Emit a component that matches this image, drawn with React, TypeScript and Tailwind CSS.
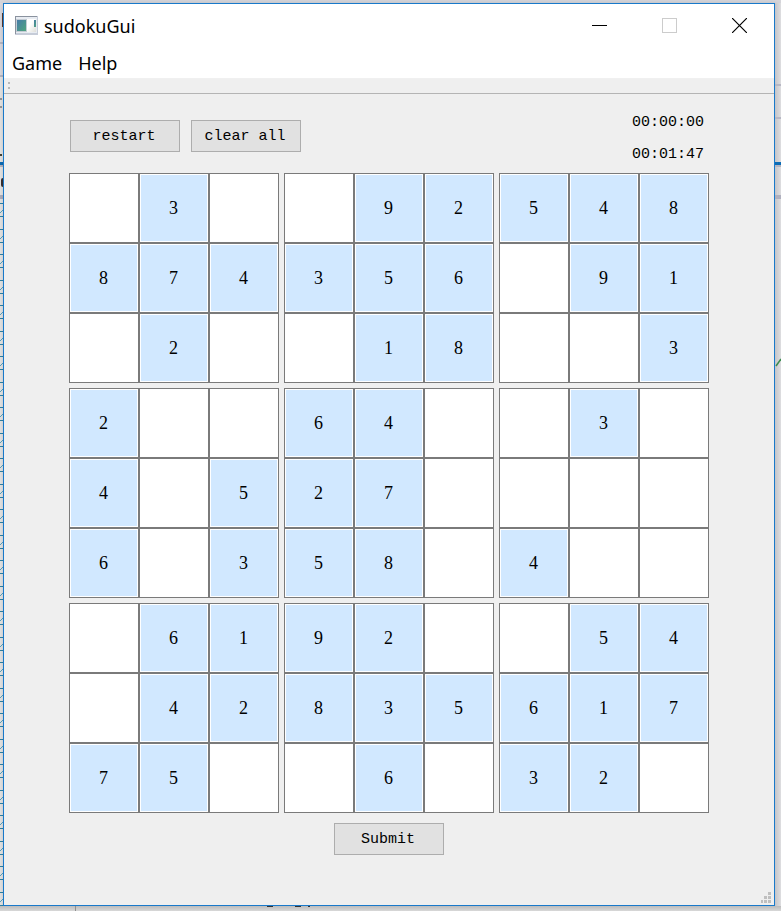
const blocks = [
  [" 3 874 2 ", " 92356 18", "548 91  3"],
  ["2  4 56 3", "64 27 58 ", " 3    4  "],
  [" 61 4275 ", "92 835 6 ", " 5461732 "],
];

const rows = Array.from({ length: 28 }, (_, i) => i);

function Cell({ value, name }: { value: string; name: string }) {
  const given = value !== " ";
  return (
    <input
      type="text"
      aria-label={name}
      defaultValue={given ? value : ""}
      readOnly={given}
      maxLength={1}
      className={`aspect-square w-full min-w-0 border border-[#7a7a7a] p-0 pt-px pr-px text-center font-['Liberation_Serif',serif] text-[18px] outline-none ring-1 ring-inset ring-white ${
        given ? "bg-[#d1e8ff]" : "bg-white"
      }`}
    />
  );
}

function Board() {
  return (
    <div className="grid grid-cols-3 gap-[5px]">
      {blocks.flatMap((band, r) =>
        band.map((block, c) => (
          <div key={`${r}-${c}`} className="grid grid-cols-3">
            {block.split("").map((v, i) => (
              <Cell
                key={i}
                value={v}
                name={`Row ${r * 3 + Math.floor(i / 3) + 1}, column ${c * 3 + (i % 3) + 1}`}
              />
            ))}
          </div>
        )),
      )}
    </div>
  );
}

const push =
  "h-8 w-[110px] border border-[#adadad] bg-[#e1e1e1] pt-[2px] pr-[2px] font-['Liberation_Mono',monospace] text-[15px] leading-4";

function TitleBar() {
  return (
    <header className="flex h-[43px] items-center bg-white pl-[11px]">
      <svg width="23" height="19" viewBox="0 0 23 19" aria-hidden="true">
        <defs>
          <linearGradient id="screen" x1="0" y1="0" x2="1" y2="1">
            <stop offset="0" stopColor="#477ba8" />
            <stop offset="1" stopColor="#4fa57e" />
          </linearGradient>
          <linearGradient id="panel" x1="0" y1="0" x2="1" y2="1">
            <stop offset="0.4" stopColor="#fff" />
            <stop offset="1" stopColor="#deded8" />
          </linearGradient>
        </defs>
        <rect width="23" height="19" fill="#c6ccd8" />
        <path d="M0 18V0H22V1H1V18Z" fill="#8a929e" />
        <rect x="1" y="1" width="21" height="16" fill="#e8ecf2" />
        <rect x="1" y="3" width="11" height="13" fill="#c4ccd4" />
        <rect x="2" y="4" width="9" height="11" fill="url(#screen)" />
        <rect x="12" y="3" width="9" height="13" fill="url(#panel)" />
        <rect x="19" y="4" width="2" height="7" fill="url(#screen)" />
      </svg>
      <h1 className="ml-[6px] flex-1 text-[18px] leading-6">sudokuGui</h1>
      <button aria-label="Minimize" className="flex h-full w-[70px] items-center justify-center">
        <svg width="15" height="15" viewBox="0 0 15 15" shapeRendering="crispEdges">
          <path d="M0 7.5H15" stroke="#000" />
        </svg>
      </button>
      <button aria-label="Maximize" disabled className="flex h-full w-[70px] items-center justify-center">
        <svg width="15" height="15" viewBox="0 0 15 15" shapeRendering="crispEdges">
          <rect x="0.5" y="0.5" width="14" height="14" fill="none" stroke="#ccc" />
        </svg>
      </button>
      <button aria-label="Close" className="flex h-full w-[70px] items-center justify-center">
        <svg width="15" height="15" viewBox="0 0 15 15">
          <path d="M0 0L15 15M15 0L0 15" stroke="#000" strokeWidth="1.2" />
        </svg>
      </button>
    </header>
  );
}

export default function App() {
  return (
    <div className="flex min-h-screen flex-col bg-[#e2e2e2] font-['Noto_Sans',sans-serif] text-black">
      <div className="h-[3px] bg-[#d5d5da]" />
      <div className="flex flex-1">
        <div className="flex w-[3px] flex-col overflow-hidden bg-[#e6e6e6]">
          <div className="h-[39px] bg-[#dadae0] pt-[10px]">
            <div className="ml-[2px] h-[14px] bg-[#5c3a30]" />
          </div>
          <div className="h-[33px] border-t-2 border-[#b8b8c4] bg-[#dadae0]" />
          <div className="flex h-[87px] flex-col border-t-2 border-[#b8b8c4] pt-[21px]">
            <div className="h-[2px] w-[2px] bg-[#999]" />
            <div className="mt-[6px] h-[2px] w-[2px] bg-[#999]" />
            <div className="mt-[46px] h-[2px] w-[2px] bg-[#443]" />
          </div>
          <div className="h-[3px] bg-[#0d6cb5]" />
          <div className="h-[2px] bg-[#b4b4c0]" />
          <div className="h-7 pt-[11px]">
            <div className="ml-px h-[9px] rounded-l-full bg-[#3a3030]" />
          </div>
          <div className="mb-1 h-1 bg-[#b0b0be]" />
          {rows.map((i) => (
            <div key={i} className={i === 27 ? "h-[14px]" : i % 2 ? "h-[25px]" : "h-[26px]"}>
              <svg width="3" height="14" viewBox="0 0 3 14" className="block">
                <path d="M0 0.5H3M0 13.5H3" stroke="#2f84a6" />
                <path d="M0 10L3 7" stroke="#58a5c0" />
              </svg>
            </div>
          ))}
        </div>

        <main className="flex min-w-0 flex-1 flex-col border border-[#1979ca] bg-[#efefef] shadow-[1px_2px_6px_rgba(0,0,0,0.25)]">
          <TitleBar />
          <nav className="flex h-8 items-center gap-4 border-b border-[#f0f0f0] bg-white pl-2 text-[18px] leading-6">
            <button>Game</button>
            <button>Help</button>
          </nav>
          <div className="flex h-[15px] flex-col gap-[3px] border-b border-[#b4b4b4] pt-[3px] pl-1">
            <span className="size-[2px] bg-[#b8b8b8]" />
            <span className="size-[2px] bg-[#b8b8b8]" />
          </div>

          <div className="flex flex-1 flex-col px-[65px] pt-3">
            <div className="flex h-[67px] items-start">
              <div className="flex gap-[11px] pt-[14px] pl-px">
                <button className={push}>restart</button>
                <button className={push}>clear all</button>
              </div>
              <div className="ml-auto pt-px pr-[5px] text-right font-['Liberation_Mono',monospace] text-[15px] leading-8">
                <p>00:00:00</p>
                <p>00:01:47</p>
              </div>
            </div>
            <Board />
            <div className="flex justify-center pt-[10px]">
              <button className={push}>Submit</button>
            </div>
          </div>
          <div className="flex justify-end pr-[3px] pb-[2px]">
            <svg width="11" height="11" viewBox="0 0 11 11" fill="#bfbfbf" aria-hidden="true">
              <path d="M8 0h3v3H8zM4 4h3v3H4zM8 4h3v3H8zM1 8h2v3H1zM4 8h3v3H4zM8 8h3v3H8z" />
            </svg>
          </div>
        </main>

        <div className="flex w-[6px] flex-col bg-gradient-to-r from-[#c4c4c8] to-[#dedee0]">
          <div className="h-[81px]" />
          <div className="h-[33px] border-t-2 border-[#b8b8c4]" />
          <div className="h-[45px] border-t-2 border-[#b8b8c4]" />
          <div className="h-[3px] bg-[#0d6cb5]" />
          <div className="h-[2px] bg-[#b4b4c0]" />
          <div className="mt-7 h-1 bg-[#b0b0be]" />
          <svg width="6" height="12" viewBox="0 0 6 12" className="mt-[158px]">
            <path d="M1 9L6 2" stroke="#3c8c50" strokeWidth="1.5" fill="none" />
          </svg>
        </div>
      </div>
      <div className="flex h-[5px] bg-gradient-to-b from-[#bcbcbc] to-[#d8d8d8] pl-[75px]">
        <div className="w-px bg-[#909090]" />
        <div className="ml-[191px] h-px w-[6px] bg-[#333]" />
        <div className="ml-[22px] h-px w-[6px] bg-[#333]" />
        <div className="ml-[7px] h-px w-[2px] bg-[#333]" />
      </div>
    </div>
  );
}
